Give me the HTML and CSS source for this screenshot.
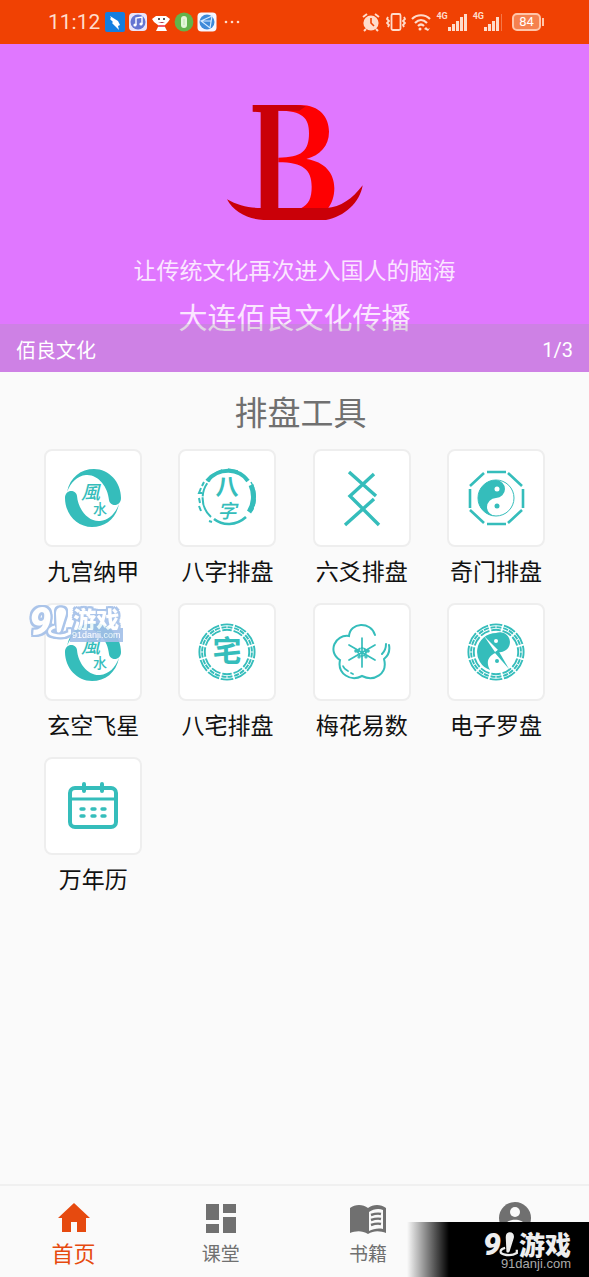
FILE: index.html
```html
<!DOCTYPE html>
<html lang="zh-CN">
<head>
<meta charset="utf-8">
<meta name="viewport" content="width=device-width, initial-scale=1">
<title>排盘工具</title>
<link rel="stylesheet" href="styles.css">
</head>
<body>
<svg class="defs" aria-hidden="true">
  <symbol id="swirl" viewBox="0 0 60 60">
    <path id="swirl-half" d="M4 24C7 9 18 1 31 1c15 0 27 13 27 29 0 9-11 9-12 2C45 19 35 6 23 7 14 8 8 14 4 24z"/>
    <use href="#swirl-half" transform="rotate(180 30 30)"/>
  </symbol>
  <symbol id="trigrams" viewBox="0 0 60 60">
    <g fill="none" stroke="currentColor" stroke-width="1.900">
      <circle cx="30" cy="30" r="27.600" pathLength="120" stroke-dasharray="8.800 1.200" stroke-dashoffset="4.400"/>
      <circle cx="30" cy="30" r="24.900" pathLength="120" stroke-dasharray="3.900 .8 3.900 1.400" stroke-dashoffset="4.300"/>
      <circle cx="30" cy="30" r="22.200" pathLength="120" stroke-dasharray="8.400 1.600" stroke-dashoffset="4.200"/>
    </g>
  </symbol>
  <symbol id="joystick" viewBox="0 0 30 40">
    <path d="M15 2c6-1 9 4 7 10l-6 19c-1 3-5 3-5 0l-1-21c0-4 1-7 5-8z"/>
    <path d="M9 26c-8 2-10 8-2 10 7 2 15 1 20-2v-5" fill="none" stroke="currentColor" stroke-width="3.500"/>
  </symbol>
  <symbol id="signal" viewBox="0 0 20 20">
    <path d="M0 15h3v4H0zM4 12h3v7H4zM8 9h3v10H8zM12 5h3v14h-3z"/>
  </symbol>
</svg>

<div class="app">
  <header class="status">
    <div class="status-side">
      <time class="clock">11:12</time>
      <svg class="app-icon" viewBox="0 0 20 20"><rect width="20" height="20" rx="2" fill="#147ee0"/><path d="M5 4l8 5 2 4-2 1 1 4-4-4-3-3 1-1-3-3 1-1z" fill="#fff"/></svg>
      <svg class="app-icon" viewBox="0 0 20 20"><rect x="1" y="1" width="18" height="18" rx="4" fill="#e9e4fa"/><circle cx="10" cy="10" r="7.500" fill="#6575d2"/><path d="M8 13V6l6-1v7" fill="none" stroke="#fff" stroke-width="1.400"/><circle cx="7" cy="13" r="1.600" fill="#fff"/><circle cx="13" cy="12" r="1.600" fill="#fff"/></svg>
      <svg class="app-icon" viewBox="0 0 20 20"><path d="M1 7l4-3h10l4 3-2 3-3 3v2l2 4H5l2-4v-2L3 10z" fill="#fff"/><circle cx="8" cy="7" r="1" fill="#222"/><circle cx="13" cy="7" r="1" fill="#222"/><path d="M7 10h7l-3 1z" fill="#a23"/><path d="M7 14h7" stroke="#e23" stroke-width="1.500"/></svg>
      <svg class="app-icon" viewBox="0 0 20 20"><circle cx="10" cy="10" r="9.400" fill="#63b34b"/><rect x="7" y="4" width="6" height="12" rx="3" fill="#e4f6d9"/><path d="M10 7v6" stroke="#bfe0b0"/></svg>
      <svg class="app-icon" viewBox="0 0 20 20"><rect x=".5" y=".5" width="19" height="19" rx="4" fill="#f6f6ff"/><circle cx="10" cy="10" r="7.500" fill="#3e8ad9"/><path d="M4 9l11-5-2 12zM4 9h10" fill="none" stroke="#d5eaff" stroke-width="1.200"/></svg>
      <svg class="dots" viewBox="0 0 16 4"><circle cx="2" cy="2" r="1.300"/><circle cx="8" cy="2" r="1.300"/><circle cx="14" cy="2" r="1.300"/></svg>
    </div>
    <div class="status-side status-right">
      <svg class="sys-icon" viewBox="0 0 20 20"><circle cx="10" cy="11" r="7.600"/><path d="M2 5l4-3M18 5l-4-3M5 17l-2 2M15 17l2 2" stroke="currentColor" stroke-width="2"/><path d="M10 6v5l3 3" fill="none" stroke="#f04103" stroke-width="1.600"/></svg>
      <svg class="sys-icon" viewBox="0 0 20 20"><g fill="none" stroke="currentColor" stroke-width="1.800"><rect x="5.500" y="2" width="9" height="16" rx="1.500"/><path d="M2 5L1 7l2 2-2 2 2 2-1 2M18 5l1 2-2 2 2 2-2 2 1 2"/></g></svg>
      <svg class="sys-icon" viewBox="0 0 20 20"><g fill="none" stroke="currentColor" stroke-width="2.200"><path d="M1 7c5-5 13-5 18 0M4 11c4-4 8-4 12 0M7 14c2-2 4-2 6 0"/></g><circle cx="9" cy="17" r="1.500"/><path d="M13 17l2-2 2 2 2-1-2 3z"/></svg>
      <span class="network">4G</span><svg class="sys-icon" viewBox="0 0 20 20"><use href="#signal"/><path d="M16 2h3v17h-3z"/></svg>
      <span class="network">4G</span><svg class="sys-icon" viewBox="0 0 20 20"><use href="#signal"/><path d="M17 2h1v17h-1z" opacity=".35"/></svg>
      <span class="battery">84</span>
    </div>
  </header>

  <main>
    <section class="banner">
      <svg class="logo" viewBox="0 0 510 435" role="img" aria-label="B">
        <path d="M205 45h65c60 0 87 38 87 80 0 43-27 70-68 82 55 8 84 42 84 88 0 25-8 47-20 61h-83c28-12 35-35 35-66 0-50-25-73-100-73v-14c70 0 92-20 92-73 0-47-20-68-92-68z" fill="#fe0002"/>
        <path d="M128 45h130l30 4-20 13h-63v292h145c42-3 77-27 108-68-8 52-55 94-110 104H160c-44-2-90-24-109-62 31 18 66 26 101 26V67l-24-2z" fill="#ca0008"/>
      </svg>
      <p class="slogan">让传统文化再次进入国人的脑海</p>
      <p class="company">大连佰良文化传播</p>
      <div class="caption"><span>佰良文化</span><span>1/3</span></div>
    </section>

    <section class="tools">
      <h1>排盘工具</h1>
      <div class="grid">
        <button class="tool"><span class="card"><svg class="icon" viewBox="0 0 60 60"><use href="#swirl"/><text x="18" y="31" class="brush brush-lg">風</text><text x="30" y="46" class="brush brush-sm">水</text></svg></span>九宫纳甲</button>
        <button class="tool"><span class="card"><svg class="icon" viewBox="0 0 60 60">
          <g fill="none" stroke="currentColor">
            <path d="M10 13C22-1 42 0 51 13" stroke-width="4"/><path d="M54 17c4 9 3 20-2 27" stroke-width="5"/>
            <path d="M54 14c5 9 6 19 1 29" stroke-width="1.500" stroke-dasharray="7 2"/>
            <path d="M49 49C39 58 26 58 17 51" stroke-width="2.600"/><path d="M14 49C3 39 3 22 13 12" stroke-width="2" stroke-dasharray="22 1 14 2"/>
            <path d="M7 14l-2 4M4 20l-2 5h3M2 30l1 5M2 38l2 5M12 53l3 1" stroke-width="2"/>
            <path d="M15 7L25 2M31 1l10 2M43 5l7 5" stroke-width="1.500"/>
          </g>
          <text x="30" y="27" class="brush brush-center brush-xl">八</text><text x="30" y="50" class="brush brush-center brush-lg">字</text></svg></span>八字排盘</button>
        <button class="tool"><span class="card"><svg class="icon" viewBox="0 0 60 60"><path d="M17 4l27 24M42 6L18 28l29 29M42 31L13 57" fill="none" stroke="currentColor" stroke-width="3.400"/></svg></span>六爻排盘</button>
        <button class="tool"><span class="card"><svg class="icon" viewBox="0 0 60 60">
          <path d="M21 4h19M42 5l14 13M57 21v19M56 42L42 55M40 56H21M18 55L4 42M4 40V21M4 18L18 5" fill="none" stroke="currentColor" stroke-width="2.600"/>
          <circle cx="30" cy="30" r="18" fill="none" stroke="currentColor"/>
          <path d="M30 12a18 18 0 0 0 0 36 9 9 0 0 1 0-18 9 9 0 0 0 0-18z"/><circle cx="31" cy="21" r="2.500" fill="#fff"/><circle cx="31" cy="38" r="2.500"/></svg></span>奇门排盘</button>
        <button class="tool"><span class="card"><svg class="icon" viewBox="0 0 60 60"><use href="#swirl"/><text x="18" y="31" class="brush brush-lg">風</text><text x="30" y="46" class="brush brush-sm">水</text></svg>
          <span class="mark mark-blue"><span class="mark-nine">9</span><svg class="mark-stick" viewBox="0 0 30 40"><use href="#joystick"/></svg><span class="mark-words"><b>游戏</b><small>91danji.com</small></span></span></span>玄空飞星</button>
        <button class="tool"><span class="card"><svg class="icon" viewBox="0 0 60 60"><use href="#trigrams"/><text x="30" y="40" class="brush brush-center brush-xxl">宅</text></svg></span>八宅排盘</button>
        <button class="tool"><span class="card"><svg class="icon" viewBox="0 0 60 60">
          <g fill="none" stroke="currentColor" stroke-width="2" stroke-linecap="round">
            <path d="M43 13C39-1 18 0 17 14 3 12-5 30 8 38c-3 14 11 22 22 16 12 6 26-2 22-17 5-4 6-9 5-14M54 22c0 5-1 7-4 10"/>
            <path d="M11 44c1 3 3 4 5 5M19 51l2 1M30 16v29M17 23l26 15M43 23L17 38" stroke-width="1.700"/>
            <circle cx="30" cy="30" r="4" stroke-dasharray="1 2"/><circle cx="24" cy="29" r=".8"/><circle cx="36" cy="29" r=".8"/><circle cx="27" cy="35" r=".6"/><circle cx="34" cy="35" r=".6"/>
          </g></svg></span>梅花易数</button>
        <button class="tool"><span class="card"><svg class="icon" viewBox="0 0 60 60"><use href="#trigrams"/>
          <path d="M30 11a19 19 0 0 0-6 37c-5-9-1-15 8-18a10 10 0 1 0-2-19z"/><circle cx="30" cy="19" r="2" fill="#fff"/><circle cx="31" cy="39" r="2"/>
          <path d="M18 14l14 14-3 2z" fill="#fff"/><path d="M32 28l11 19-14-16z"/></svg></span>电子罗盘</button>
        <button class="tool"><span class="card"><svg class="icon" viewBox="0 0 60 60">
          <g fill="none" stroke="currentColor" stroke-width="4" stroke-linecap="round"><rect x="7" y="12" width="46" height="39" rx="5"/><path d="M8 23h44" stroke-width="3"/><path d="M21 8v7M39 8v7"/><path d="M18 33h3M29 33h3M39 33h3M18 40h3M29 40h3M39 40h3" stroke-width="3.400"/></g></svg></span>万年历</button>
      </div>
    </section>
  </main>

  <nav class="tabs">
    <a href="#" class="tab tab-active"><svg class="tab-icon" viewBox="0 0 36 36"><path d="M18 3L2 18h4v14h9V22h6v10h9V18h4z"/></svg>首页</a>
    <a href="#" class="tab"><svg class="tab-icon" viewBox="0 0 36 36"><path d="M3 4h13v16H3zM20 4h13v9H20zM3 24h13v9H3zM20 17h13v16H20z"/></svg>课堂</a>
    <a href="#" class="tab"><svg class="tab-icon" viewBox="0 0 36 36"><path d="M0 8C5 4 13 4 18 8c5-4 13-4 18 0v25c-5-2-12-3-18 1-6-4-13-3-18-1z"/><path d="M19 12c4-3 10-4 14-2v19c-5-1-10 0-14 2z" fill="#fafafa"/><path d="M21 15c3-1 6-2 10-1M21 20c3-1 6-2 10-1M21 25c3-1 6-2 10-1" fill="none" stroke="currentColor" stroke-width="2.400"/></svg>书籍</a>
    <a href="#" class="tab"><svg class="tab-icon" viewBox="0 0 36 36"><circle cx="18" cy="18" r="16"/><circle cx="18" cy="12" r="5" fill="#fafafa"/><path d="M8 25c2-7 18-7 20 0-5 7-15 7-20 0z" fill="#fafafa"/></svg></a>
  </nav>
  <div class="mark mark-dark"><span class="mark-nine">9</span><svg class="mark-stick" viewBox="0 0 30 40"><use href="#joystick"/></svg><span class="mark-words"><b>游戏</b></span><small class="mark-site">91danji.com</small></div>
</div>
</body>
</html>
```

FILE: styles.css
```css
* { box-sizing: border-box; }
body {
  margin: 0;
  background: #fafafa;
  font-family: Roboto, "Noto Sans CJK SC", sans-serif;
  color: #111;
}
p, h1 { margin: 0; font-weight: 400; }
svg { fill: currentColor; flex: none; }
.defs { position: absolute; width: 0; height: 0; }
.app {
  position: relative;
  display: flex;
  flex-direction: column;
  min-height: 100vh;
}
main { flex: 1; }

.status {
  display: flex;
  justify-content: space-between;
  height: 44px;
  padding: 0 48px;
  background: #f04103;
  color: #ffdccb;
}
.status-side { display: flex; align-items: center; gap: 3px; }
.clock { font-size: 21px; margin-right: 2px; }
.app-icon { width: 20px; height: 20px; }
.dots { width: 16px; height: 4px; margin-left: 4px; }
.status-right { gap: 5px; }
.sys-icon { width: 20px; height: 20px; }
.network { align-self: flex-start; margin: 11px -5px 0 0; font-size: 9px; font-weight: 700; }
.battery {
  position: relative;
  width: 29px;
  margin-left: 3px;
  border: 2px solid #ffc5a9;
  border-radius: 5px;
  background: #f5814f;
  color: #fff;
  font-size: 13px;
  line-height: 14px;
  text-align: center;
}
.battery::after {
  content: "";
  position: absolute;
  top: 3px;
  right: -5px;
  width: 2px;
  height: 8px;
  background: #ffc5a9;
}

.banner {
  position: relative;
  display: flex;
  flex-direction: column;
  align-items: center;
  height: 328px;
  padding-top: 46px;
  background: #e077ff;
  color: #fbe6ff;
}
.logo { width: 170px; height: 145px; }
.slogan { margin-top: 20px; font-size: 23px; line-height: 34px; }
.company { margin-top: 8px; font-size: 29px; line-height: 44px; }
.caption {
  position: absolute;
  inset: auto 0 0;
  display: flex;
  justify-content: space-between;
  align-items: center;
  height: 48px;
  padding: 3px 16px 0;
  background: rgba(160, 160, 160, .27);
  color: #fff;
  font-size: 20px;
}

.tools { padding: 0 26px 24px; }
.tools h1 {
  padding: 18px 0 11px 12px;
  font-size: 33px;
  line-height: 48px;
  text-align: center;
  color: #707070;
}
.grid { display: grid; grid-template-columns: repeat(4, 1fr); }
.tool {
  display: flex;
  flex-direction: column;
  align-items: center;
  height: 154px;
  padding: 0;
  border: 0;
  background: none;
  color: #111;
  font: inherit;
  font-size: 23px;
  line-height: 52px;
}
.card {
  position: relative;
  display: grid;
  place-items: center;
  width: 98px;
  height: 98px;
  border: 2px solid #eee;
  border-radius: 8px;
  background: #fff;
  color: #35bdbb;
}
.icon { width: 60px; height: 60px; }
.brush { font-family: "Noto Sans CJK SC", sans-serif; font-weight: 500; }
.brush-center { text-anchor: middle; }
.brush-sm { font-size: 14px; }
.brush-lg { font-size: 19px; font-style: italic; }
.brush-xl { font-size: 23px; font-weight: 700; }
.brush-xxl { font-size: 29px; font-weight: 700; }

.tabs {
  display: grid;
  grid-template-columns: repeat(4, 1fr);
  height: 93px;
  border-top: 2px solid #f0f0f0;
}
.tab {
  display: flex;
  flex-direction: column;
  align-items: center;
  padding-top: 14px;
  color: #707070;
  font-size: 19px;
  line-height: 38px;
  text-decoration: none;
}
.tab-active { color: #e64a0f; font-size: 22px; }
.tab-icon { width: 36px; height: 36px; }

.mark {
  position: absolute;
  display: flex;
  font-family: "Noto Sans CJK SC", sans-serif;
  font-weight: 900;
}
.mark-blue {
  top: 1px;
  left: -17px;
  color: #fff;
  line-height: 1;
  filter: drop-shadow(2px 0 0 #a3bfe8) drop-shadow(-2px 0 0 #a3bfe8) drop-shadow(0 2px 0 #a3bfe8) drop-shadow(0 -2px 0 #a3bfe8);
  opacity: .9;
}
.mark-nine { font-family: Roboto, sans-serif; font-size: 39px; line-height: 32px; font-style: italic; font-weight: 900; }
.mark-stick { width: 24px; height: 32px; margin-left: -3px; }
.mark-words { display: flex; flex-direction: column; }
.mark-words b { font-size: 23px; line-height: 24px; font-weight: 900; }
.mark-words small { background: #a3bfe8; font: 9px/10px "Liberation Sans", sans-serif; }
.mark-dark {
  right: 0;
  bottom: 0;
  flex-wrap: wrap;
  align-content: flex-start;
  justify-content: flex-end;
  width: 182px;
  height: 55px;
  padding: 9px 18px 0 0;
  background: linear-gradient(90deg, transparent, #000 42px);
  color: #eee;
}
.mark-dark .mark-nine { font-size: 32px; line-height: 26px; }
.mark-dark .mark-stick { width: 20px; height: 26px; margin-left: -2px; }
.mark-dark .mark-words b { font-size: 26px; line-height: 26px; }
.mark-site { width: 100%; text-align: right; font: 13px/14px "Liberation Sans", sans-serif; color: #aaa; }
```
